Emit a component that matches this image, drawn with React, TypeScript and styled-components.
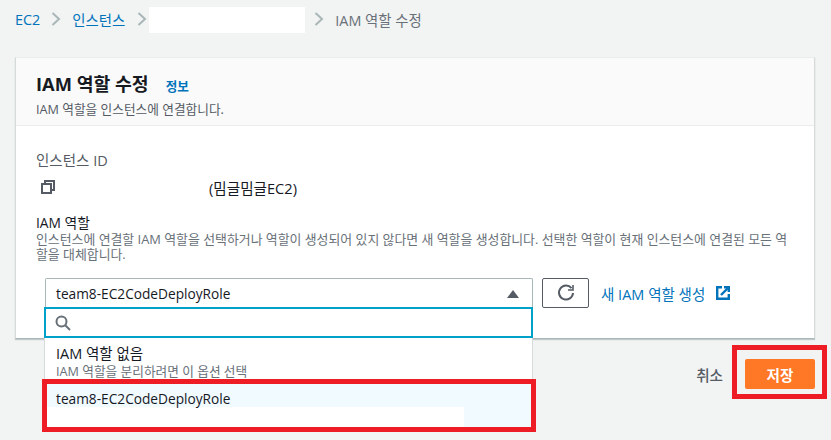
import React from 'react';
import styled, {createGlobalStyle} from 'styled-components';

const GlobalStyle = createGlobalStyle`
  html, body {
    margin: 0;
    padding: 0;
    background: #f2f3f3;
    font-family: "Open Sans", "Noto Sans CJK KR", sans-serif;
    color: #16191f;
  }
  * { box-sizing: border-box; }
`;
const Page = styled.div`
  position: relative;
  width: 831px;
  height: 440px;
  overflow: hidden;
  padding: 6px 16px 0 15px;
`;
const Breadcrumbs = styled.nav`
  display: flex;
  align-items: center;
  height: 26px;
  font-size: 14.4px;
  white-space: nowrap;
`;
const Crumb = styled.span<{$link?: boolean}>`
  color: ${props => props.$link ? '#0073bb' : '#687078'};
`;
const Sep = styled.svg<{$l: number; $r: number}>`
  width: 10px;
  height: 14px;
  margin: 0 ${props => props.$r}px 0 ${props => props.$l}px;
  fill: none;
  stroke: #aab7b8;
  stroke-width: 2;
  flex: none;
`;
const Redacted = styled.span`
  width: 156px;
  height: 26px;
  margin-top: 2px;
  background: #fff;
  flex: none;
`;
const Card = styled.section`
  margin-top: 25px;
  height: 282px;
  background: #fff;
  border-left: 1px solid #d5dbdb;
  border-right: 1px solid #d5dbdb;
  border-bottom: 1px solid #aab7b8;
  border-top: 1px solid #eaeded;
  box-shadow: 0 1px 1px rgba(0, 28, 36, 0.2);
`;
const CardHead = styled.header`
  height: 68px;
  padding: 13px 20px 0;
  background: #fafafa;
  border-bottom: 1px solid #eaeded;
`;
const TitleRow = styled.div`
  display: flex;
  align-items: baseline;
  gap: 17px;
  height: 26px;
`;
const Title = styled.h1`
  margin: 0;
  font-size: 18.3px;
  font-weight: 700;
  line-height: 26px;
`;
const Info = styled.a`
  font-size: 12.6px;
  font-weight: 600;
  color: #0073bb;
`;
const Sub = styled.p`
  margin: 3px 0 0;
  font-size: 12.7px;
  line-height: 18px;
  color: #545b64;
`;
const CardBody = styled.div`
  padding: 26px 20px 0;
`;
const Label = styled.div`
  font-size: 14.5px;
  line-height: 18px;
  color: #545b64;
`;
const IdRow = styled.div`
  display: flex;
  align-items: center;
  height: 20px;
  margin-top: 7px;
  padding-left: 5px;
  font-size: 14.6px;
`;
const IdName = styled.span`
  margin-left: 154px;
`;
const RoleLabel = styled.div`
  margin-top: 17px;
  font-size: 13.8px;
  line-height: 18px;
`;
const Hint = styled.p`
  margin: 0;
  font-size: 12.9px;
  line-height: 15px;
  color: #687078;
`;
const Controls = styled.div`
  display: flex;
  align-items: center;
  margin: 16px 0 0 9px;
`;
const SelectWrap = styled.div`
  position: relative;
  width: 488px;
`;
const Select = styled.div`
  display: flex;
  align-items: center;
  justify-content: space-between;
  height: 30px;
  padding: 0 13px 0 10px;
  font-size: 13.7px;
  background: #fff;
  border: 1px solid #aab7b8;
  border-bottom: none;
  border-radius: 2px 2px 0 0;
`;
const Caret = styled.i`
  width: 0;
  height: 0;
  border-left: 6px solid transparent;
  border-right: 6px solid transparent;
  border-bottom: 8px solid #545b64;
`;
const Dropdown = styled.div`
  position: absolute;
  top: 29px;
  left: -1px;
  width: 489px;
  height: 125px;
  background: #fff;
  border-left: 1px solid #d5dbdb;
  border-right: 1px solid #d5dbdb;
`;
const SearchBox = styled.div`
  display: flex;
  align-items: center;
  height: 31px;
  margin-left: -1px;
  margin-right: -1px;
  padding-left: 9px;
  background: #fff;
  border: 2px solid #00a1c9;
`;
const Option = styled.div`
  height: 41px;
  padding: 7px 11px 0;
`;
const OptionName = styled.div`
  font-size: 14.5px;
  line-height: 18px;
`;
const OptionHint = styled.div`
  font-size: 12.7px;
  line-height: 16px;
  color: #687078;
`;
const ActiveOption = styled.div`
  height: 52px;
  padding: 11px 11px 0;
  background: #f1faff;
  font-size: 13.7px;
  line-height: 17px;
`;
const RedactedLine = styled.div`
  width: 417px;
  height: 20px;
  margin-left: -9px;
  background: #fff;
`;
const RefreshButton = styled.button`
  display: flex;
  align-items: center;
  justify-content: center;
  width: 47px;
  height: 30px;
  margin-left: 9px;
  padding: 0;
  background: #fff;
  border: 1px solid #545b64;
  border-radius: 2px;
`;
const NewRole = styled.a`
  display: flex;
  align-items: center;
  gap: 11px;
  margin-left: 12px;
  font-size: 14.5px;
  color: #0073bb;
`;
const Footer = styled.footer`
  display: flex;
  justify-content: flex-end;
  align-items: center;
  gap: 22px;
  margin-top: 20px;
`;
const Cancel = styled.span`
  font-size: 14.6px;
  font-weight: 500;
  color: #545b64;
`;
const Save = styled.button`
  width: 70px;
  height: 30px;
  padding: 0;
  font-family: inherit;
  font-size: 14.6px;
  font-weight: 700;
  color: #fff;
  background: #ff7825;
  border: none;
  border-radius: 2px;
`;
const Highlight = styled.div<{$x: number; $y: number; $w: number; $h: number}>`
  position: absolute;
  left: ${props => props.$x}px;
  top: ${props => props.$y}px;
  width: ${props => props.$w}px;
  height: ${props => props.$h}px;
  border: 5px solid #ee1c25;
`;

const Chevron = ({l, r}: {l: number; r: number}) => (
	<Sep $l={l} $r={r} viewBox="0 0 10 14">
		<path d="M1.5 1 L8 7 L1.5 13"/>
	</Sep>
);

const App: React.FC = () => (
	<>
		<GlobalStyle/>
		<Page>
			<Breadcrumbs>
				<Crumb $link>EC2</Crumb>
				<Chevron l={11} r={11}/>
				<Crumb $link>인스턴스</Crumb>
				<Chevron l={12} r={2}/>
				<Redacted/>
				<Chevron l={9} r={11}/>
				<Crumb>IAM 역할 수정</Crumb>
			</Breadcrumbs>
			<Card>
				<CardHead>
					<TitleRow>
						<Title>IAM 역할 수정</Title>
						<Info>정보</Info>
					</TitleRow>
					<Sub>IAM 역할을 인스턴스에 연결합니다.</Sub>
				</CardHead>
				<CardBody>
					<Label>인스턴스 ID</Label>
					<IdRow>
						<svg width="14" height="14" viewBox="0 0 14 14" fill="none" stroke="#545b64" strokeWidth="2">
							<rect x="1" y="4" width="9" height="9"/>
							<path d="M4 4 V1 H13 V10 H10"/>
						</svg>
						<IdName>(밈글밈글EC2)</IdName>
					</IdRow>
					<RoleLabel>IAM 역할</RoleLabel>
					<Hint>인스턴스에 연결할 IAM 역할을 선택하거나 역할이 생성되어 있지 않다면 새 역할을 생성합니다. 선택한 역할이 현재 인스턴스에 연결된 모든 역할을 대체합니다.</Hint>
					<Controls>
						<SelectWrap>
							<Select>
								team8-EC2CodeDeployRole
								<Caret/>
							</Select>
							<Dropdown>
								<SearchBox>
									<svg width="16" height="16" viewBox="0 0 16 16" fill="none" stroke="#687078" strokeWidth="2">
										<circle cx="6.5" cy="6.5" r="5"/>
										<path d="M10 10 L15 15"/>
									</svg>
								</SearchBox>
								<Option>
									<OptionName>IAM 역할 없음</OptionName>
									<OptionHint>IAM 역할을 분리하려면 이 옵션 선택</OptionHint>
								</Option>
								<ActiveOption>
									team8-EC2CodeDeployRole
									<RedactedLine/>
								</ActiveOption>
							</Dropdown>
						</SelectWrap>
						<RefreshButton aria-label="새로 고침">
							<svg width="18" height="18" viewBox="0 0 18 18" fill="none" stroke="#545b64" strokeWidth="2">
								<path d="M14.5 4.2 A7 7 0 1 0 16 9"/>
								<path d="M16 1 V6 H11" strokeWidth="1.6"/>
							</svg>
						</RefreshButton>
						<NewRole>
							새 IAM 역할 생성
							<svg width="14" height="14" viewBox="0 0 14 14" fill="none" stroke="#0073bb" strokeWidth="2.4">
								<path d="M6 1.2 H1.2 V12.8 H12.8 V8"/>
								<path d="M5 9 L12.5 1.5"/>
								<path d="M8 1.2 H12.8 V6"/>
							</svg>
						</NewRole>
					</Controls>
				</CardBody>
			</Card>
			<Footer>
				<Cancel>취소</Cancel>
				<Save>저장</Save>
			</Footer>
			<Highlight $x={42} $y={379} $w={494} $h={53}/>
			<Highlight $x={732} $y={345} $w={95} $h={54}/>
		</Page>
	</>
);

export default App;
